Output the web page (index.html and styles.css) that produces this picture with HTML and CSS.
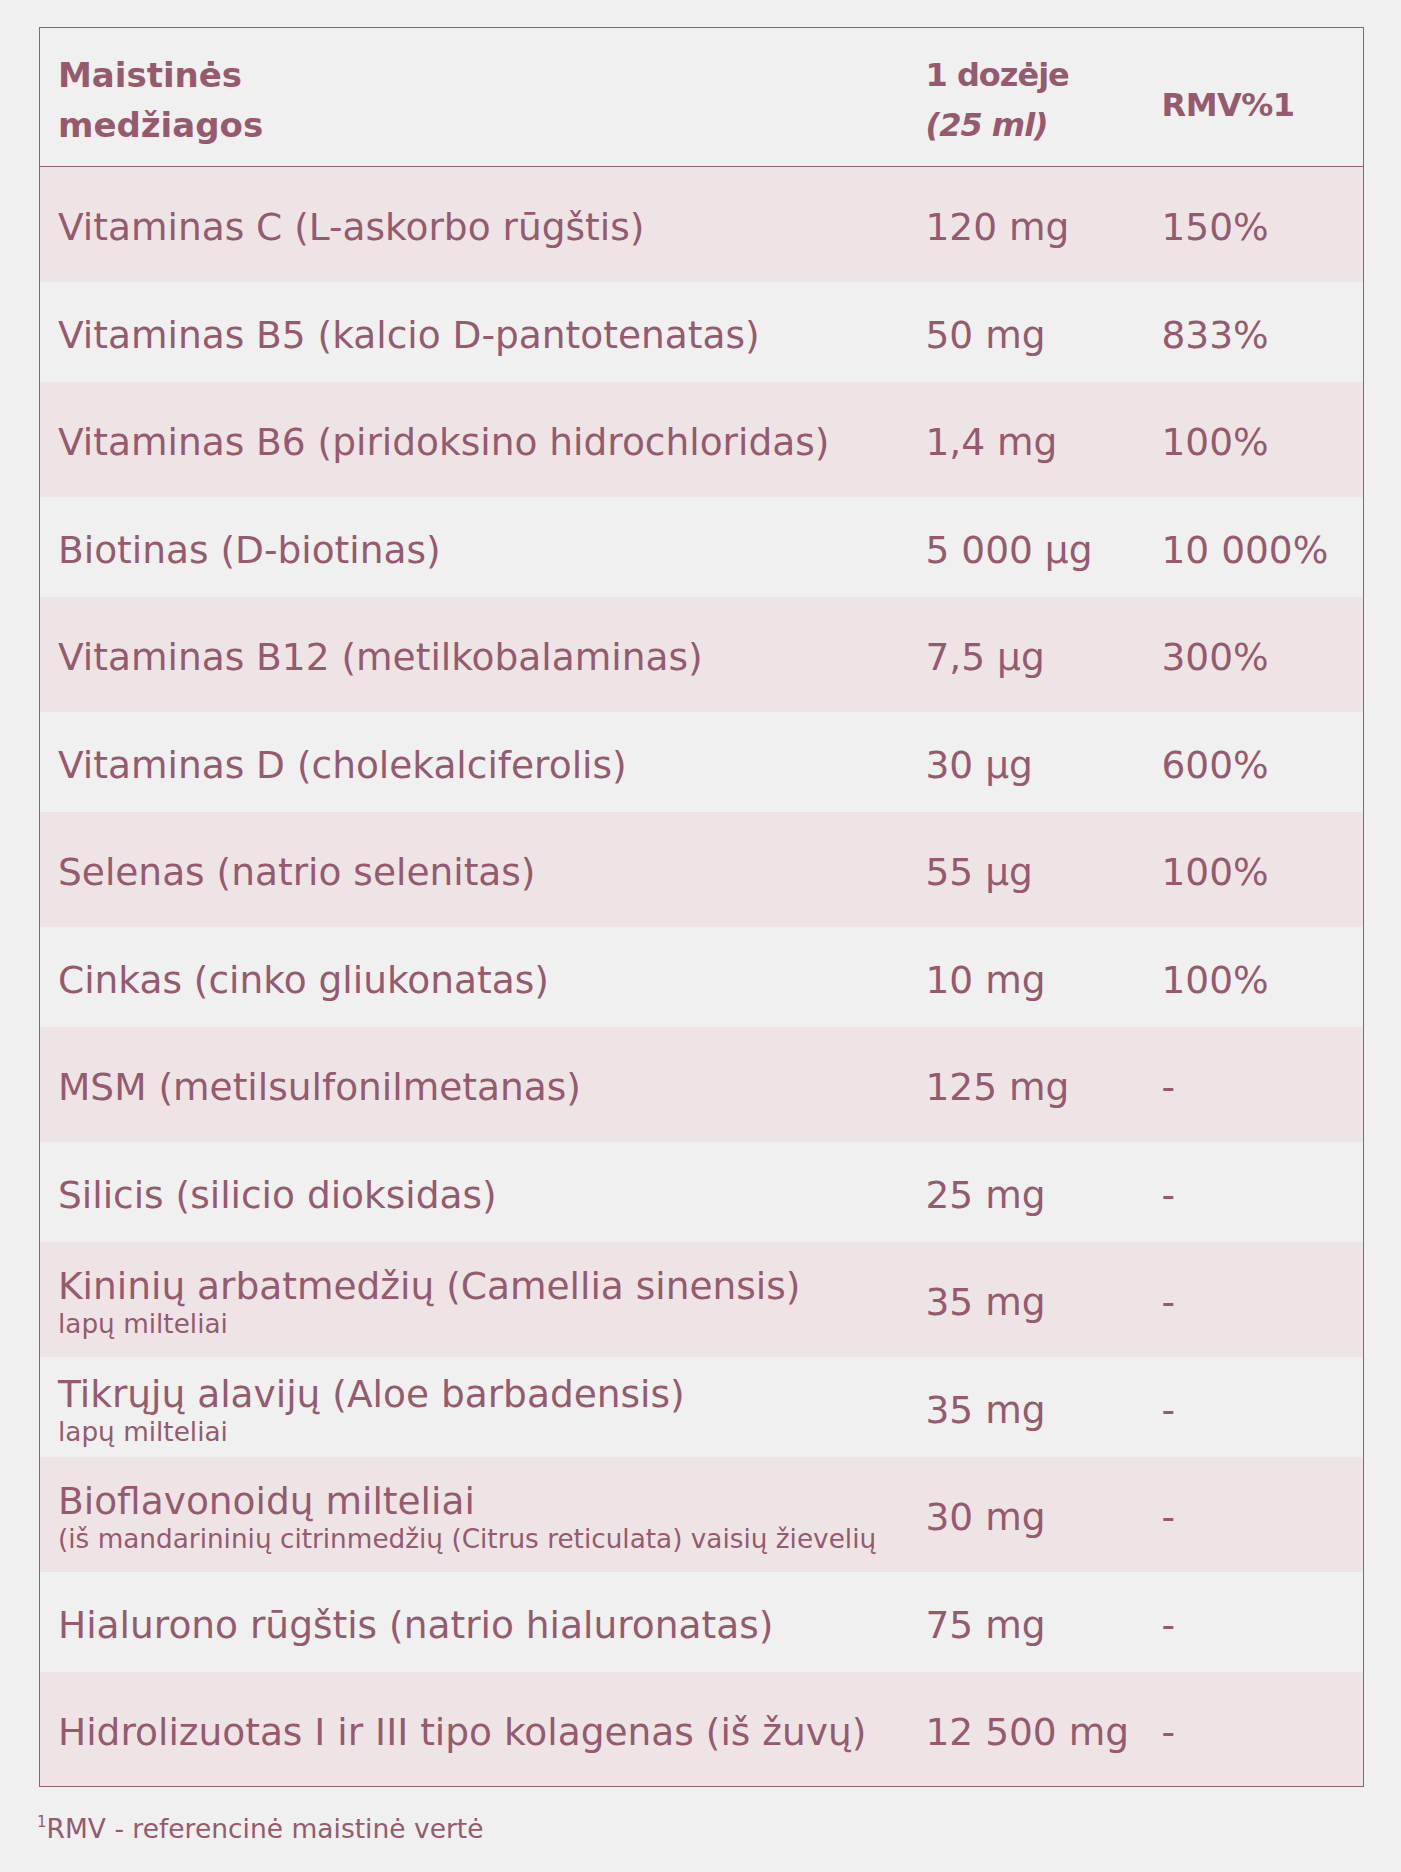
FILE: index.html
```html
<!DOCTYPE html>
<html lang="lt">
<head>
<meta charset="utf-8">
<title>Maistinės medžiagos</title>
<link rel="stylesheet" href="styles.css">
</head>
<body>
<main class="page">
  <table class="nutri">
    <colgroup>
      <col class="c-name">
      <col class="c-dose">
      <col class="c-rmv">
    </colgroup>
    <thead>
      <tr>
        <th>Maistinės<br>medžiagos</th>
        <th class="dose">1 dozėje<br><em>(25 ml)</em></th>
        <th class="rmv">RMV%1</th>
      </tr>
    </thead>
    <tbody>
      <tr class="alt"><td>Vitaminas C (L-askorbo rūgštis)</td><td>120 mg</td><td>150%</td></tr>
      <tr><td>Vitaminas B5 (kalcio D-pantotenatas)</td><td>50 mg</td><td>833%</td></tr>
      <tr class="alt"><td>Vitaminas B6 (piridoksino hidrochloridas)</td><td>1,4 mg</td><td>100%</td></tr>
      <tr><td>Biotinas (D-biotinas)</td><td>5 000 µg</td><td>10 000%</td></tr>
      <tr class="alt"><td>Vitaminas B12 (metilkobalaminas)</td><td>7,5 µg</td><td>300%</td></tr>
      <tr><td>Vitaminas D (cholekalciferolis)</td><td>30 µg</td><td>600%</td></tr>
      <tr class="alt"><td>Selenas (natrio selenitas)</td><td>55 µg</td><td>100%</td></tr>
      <tr><td>Cinkas (cinko gliukonatas)</td><td>10 mg</td><td>100%</td></tr>
      <tr class="alt"><td>MSM (metilsulfonilmetanas)</td><td>125 mg</td><td>-</td></tr>
      <tr><td>Silicis (silicio dioksidas)</td><td>25 mg</td><td>-</td></tr>
      <tr class="alt"><td class="two"><span class="main">Kininių arbatmedžių (Camellia sinensis)</span><span class="sub">lapų milteliai</span></td><td>35 mg</td><td>-</td></tr>
      <tr><td class="two"><span class="main">Tikrųjų alavijų (Aloe barbadensis)</span><span class="sub">lapų milteliai</span></td><td>35 mg</td><td>-</td></tr>
      <tr class="alt"><td class="two"><span class="main">Bioflavonoidų milteliai</span><span class="sub">(iš mandarininių citrinmedžių (Citrus reticulata) vaisių žievelių</span></td><td>30 mg</td><td>-</td></tr>
      <tr><td>Hialurono rūgštis (natrio hialuronatas)</td><td>75 mg</td><td>-</td></tr>
      <tr class="alt"><td>Hidrolizuotas I ir III tipo kolagenas (iš žuvų)</td><td>12 500 mg</td><td>-</td></tr>
    </tbody>
  </table>
  <p class="note"><sup>1</sup>RMV - referencinė maistinė vertė</p>
</main>
</body>
</html>
```

FILE: styles.css
```css
html, body {
  margin: 0;
  padding: 0;
  background: #f0f0f0;
}

body {
  font-family: "DejaVu Sans", "Liberation Sans", sans-serif;
  color: #955a6e;
}

.page {
  padding: 27px 38px 0 39px;
}

.nutri {
  width: 1324px;
  border-collapse: collapse;
  table-layout: fixed;
  border: 1px solid #985c6f;
}

.c-name { width: 868px; }
.c-dose { width: 236px; }
.c-rmv { width: 220px; }

.nutri th {
  height: 139px;
  box-sizing: border-box;
  padding: 5px 0 0 18px;
  text-align: left;
  vertical-align: middle;
  font-size: 34px;
  font-weight: bold;
  line-height: 50px;
  border-bottom: 1px solid #985c6f;
}

.nutri th.dose {
  font-size: 32px;
  letter-spacing: -1px;
}

.nutri th em {
  font-style: italic;
}

.nutri th.rmv {
  padding-top: 15px;
  font-size: 32px;
  letter-spacing: -0.5px;
}

.nutri td {
  height: 100px;
  box-sizing: border-box;
  padding: 7px 0 0 18px;
  font-size: 37.5px;
  line-height: 45px;
  vertical-align: middle;
  white-space: nowrap;
}

.nutri tr.alt td {
  height: 115px;
  background: #eee4e6;
}

.nutri td.two .main {
  display: block;
  line-height: 44px;
}

.nutri td.two .sub {
  display: block;
  font-size: 26.3px;
  line-height: 33px;
}

.note {
  margin: 26px 0 0 -2px;
  font-size: 26.5px;
  line-height: 32px;
}

.note sup {
  font-size: 15px;
  vertical-align: top;
  line-height: 1;
  position: relative;
  top: 2px;
}
```
